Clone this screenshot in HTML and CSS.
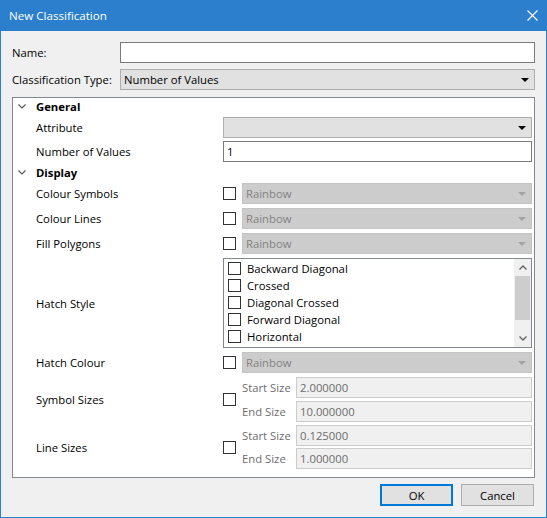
FILE: index.html
```html
<!DOCTYPE html>
<html lang="en">
<head>
  <meta charset="UTF-8">
  <title>New Classification</title>
  <link rel="stylesheet" href="styles.css">
</head>
<body>
  <div class="window">
    <div class="titlebar">
      <span class="title">New Classification</span>
      <span class="close">
        <svg width="11" height="11" viewBox="0 0 11 11"><path d="M0.5 0.5 L10.5 10.5 M10.5 0.5 L0.5 10.5" stroke="#fff" stroke-width="1.1" fill="none"/></svg>
      </span>
    </div>

    <div class="dialog-body">
      <div class="form-row">
        <span class="form-label">Name:</span>
        <div class="textbox"></div>
      </div>
      <div class="form-row gap-7">
        <span class="form-label">Classification Type:</span>
        <div class="combo">
          <span>Number of Values</span>
          <span class="arrow"></span>
        </div>
      </div>

      <!-- property tree -->
      <div class="tree">
        <div class="tree-header">
          <span class="chev"><svg width="8" height="5" viewBox="0 0 8 5"><path d="M0.5 0.5 L4 4 L7.5 0.5" stroke="#555" stroke-width="1.1" fill="none"/></svg></span>
          General
        </div>
        <div class="tree-row tight">
          <span class="tree-label">Attribute</span>
          <div class="tree-ctrl">
            <div class="combo"><span></span><span class="arrow"></span></div>
          </div>
        </div>
        <div class="tree-row">
          <span class="tree-label">Number of Values</span>
          <div class="tree-ctrl">
            <div class="textbox value">1</div>
          </div>
        </div>

        <div class="tree-header">
          <span class="chev"><svg width="8" height="5" viewBox="0 0 8 5"><path d="M0.5 0.5 L4 4 L7.5 0.5" stroke="#555" stroke-width="1.1" fill="none"/></svg></span>
          Display
        </div>
        <div class="tree-row">
          <span class="tree-label">Colour Symbols</span>
          <div class="tree-ctrl">
            <span class="checkbox"></span>
            <div class="combo disabled"><span>Rainbow</span><span class="arrow"></span></div>
          </div>
        </div>
        <div class="tree-row">
          <span class="tree-label">Colour Lines</span>
          <div class="tree-ctrl">
            <span class="checkbox"></span>
            <div class="combo disabled"><span>Rainbow</span><span class="arrow"></span></div>
          </div>
        </div>
        <div class="tree-row">
          <span class="tree-label">Fill Polygons</span>
          <div class="tree-ctrl">
            <span class="checkbox"></span>
            <div class="combo disabled"><span>Rainbow</span><span class="arrow"></span></div>
          </div>
        </div>
        <div class="tree-row">
          <span class="tree-label">Hatch Style</span>
          <div class="tree-ctrl">
            <div class="listbox">
              <div class="list-items">
                <div class="list-item"><span class="checkbox"></span>Backward Diagonal</div>
                <div class="list-item"><span class="checkbox"></span>Crossed</div>
                <div class="list-item"><span class="checkbox"></span>Diagonal Crossed</div>
                <div class="list-item"><span class="checkbox"></span>Forward Diagonal</div>
                <div class="list-item"><span class="checkbox"></span>Horizontal</div>
              </div>
              <div class="scrollbar">
                <span class="sb-btn"><svg width="8" height="5" viewBox="0 0 8 5"><path d="M0.5 4.5 L4 1 L7.5 4.5" stroke="#606060" stroke-width="1.3" fill="none"/></svg></span>
                <span class="sb-track"><span class="sb-thumb"></span></span>
                <span class="sb-btn"><svg width="8" height="5" viewBox="0 0 8 5"><path d="M0.5 0.5 L4 4 L7.5 0.5" stroke="#606060" stroke-width="1.3" fill="none"/></svg></span>
              </div>
            </div>
          </div>
        </div>
        <div class="tree-row">
          <span class="tree-label">Hatch Colour</span>
          <div class="tree-ctrl">
            <span class="checkbox"></span>
            <div class="combo disabled"><span>Rainbow</span><span class="arrow"></span></div>
          </div>
        </div>
        <div class="tree-row">
          <span class="tree-label">Symbol Sizes</span>
          <div class="tree-ctrl">
            <span class="checkbox"></span>
            <div class="sizes">
              <span class="size-label">Start Size</span>
              <div class="textbox disabled">2.000000</div>
              <span class="size-label">End Size</span>
              <div class="textbox disabled">10.000000</div>
            </div>
          </div>
        </div>
        <div class="tree-row tight-top">
          <span class="tree-label">Line Sizes</span>
          <div class="tree-ctrl">
            <span class="checkbox"></span>
            <div class="sizes narrow">
              <span class="size-label">Start Size</span>
              <div class="textbox disabled">0.125000</div>
              <span class="size-label">End Size</span>
              <div class="textbox disabled">1.000000</div>
            </div>
          </div>
        </div>
      </div>

      <div class="buttons">
        <button class="btn default">OK</button>
        <button class="btn">Cancel</button>
      </div>
    </div>
  </div>
</body>
</html>
```

FILE: styles.css
```css
html, body {
  margin: 0;
  padding: 0;
}

body {
  font-family: 'Segoe UI', 'Open Sans', sans-serif;
  font-size: 11.3px;
  color: #000;
  background: #f0f0f0;
}

.window {
  width: 547px;
  height: 518px;
  box-sizing: border-box;
  border: 1px solid #2b7fcc;
  border-top: 0;
  background: #f0f0f0;
  display: flex;
  flex-direction: column;
}

.titlebar {
  height: 31px;
  flex-shrink: 0;
  background: #2b7fcc;
  color: #fff;
  display: flex;
  align-items: center;
  padding-left: 8px;
  font-size: 11.6px;
}

.titlebar .title {
  padding-bottom: 1px;
}

.close {
  margin-left: auto;
  width: 28px;
  height: 31px;
  display: flex;
  align-items: center;
  justify-content: center;
}

.dialog-body {
  flex: 1;
  display: flex;
  flex-direction: column;
  padding: 11px 11px 11px 11px;
}

.form-row {
  display: flex;
  align-items: center;
  height: 21px;
  margin-bottom: 6px;
}

.form-row.gap-7 {
  margin-bottom: 7px;
}

.form-label {
  width: 108px;
  flex-shrink: 0;
}

.textbox {
  flex: 1;
  height: 21px;
  box-sizing: border-box;
  border: 1px solid #7a7a7a;
  background: #fff;
  display: flex;
  align-items: center;
  padding-left: 3px;
}

.textbox.disabled {
  border-color: #cccccc;
  background: #f0f0f0;
  color: #6d6d6d;
}

.combo {
  flex: 1;
  height: 21px;
  box-sizing: border-box;
  border: 1px solid #adadad;
  background: #e1e1e1;
  display: flex;
  align-items: center;
  justify-content: space-between;
  padding: 0 5px 0 3px;
}

.arrow {
  width: 0;
  height: 0;
  border-left: 4px solid transparent;
  border-right: 4px solid transparent;
  border-top: 4px solid #000;
}

.combo.disabled {
  background: #cccccc;
  border-color: #c4c4c4;
  color: #838383;
}

.combo.disabled .arrow {
  border-top-color: #a3a3a3;
}

/* property tree */
.tree {
  flex: 1;
  border: 1px solid #828790;
  background: #fff;
  padding: 0 2px 0 0;
}

.tree-header {
  height: 17px;
  display: flex;
  align-items: center;
  padding-left: 5px;
  font-weight: bold;
}

.chev {
  width: 18px;
  display: flex;
  align-items: center;
}

.tree-row {
  display: flex;
  align-items: center;
  padding: 2px 0;
}

.tree-row.tight {
  padding-bottom: 1px;
}

.tree-row.tight-top {
  padding-top: 1px;
}

.tree-label {
  width: 210px;
  flex-shrink: 0;
  padding-left: 23px;
  box-sizing: border-box;
}

.tree-ctrl {
  flex: 1;
  display: flex;
  align-items: center;
  gap: 6px;
}

.checkbox {
  width: 13px;
  height: 13px;
  box-sizing: border-box;
  border: 1px solid #333;
  background: #fff;
  flex-shrink: 0;
}

.listbox {
  flex: 1;
  height: 90px;
  box-sizing: border-box;
  border: 1px solid #828790;
  background: #fff;
  display: flex;
}

.list-items {
  flex: 1;
  padding: 1px 0 0 4px;
}

.list-item {
  height: 17px;
  display: flex;
  align-items: center;
  gap: 6px;
}

.scrollbar {
  width: 17px;
  background: #f0f0f0;
  display: flex;
  flex-direction: column;
}

.sb-btn {
  height: 17px;
  display: flex;
  align-items: center;
  justify-content: center;
}

.sb-track {
  flex: 1;
  padding: 0 1px;
}

.sb-thumb {
  display: block;
  height: 44px;
  background: #cdcdcd;
}

.sizes {
  flex: 1;
  display: grid;
  grid-template-columns: 54px 1fr;
  row-gap: 3px;
  align-items: center;
}

.sizes.narrow {
  row-gap: 2px;
}

.size-label {
  color: #6d6d6d;
}

.buttons {
  display: flex;
  justify-content: flex-end;
  gap: 8px;
  margin-top: 6px;
  padding-right: 1px;
}

.btn {
  width: 73px;
  height: 22px;
  box-sizing: border-box;
  border: 1px solid #adadad;
  background: #e1e1e1;
  font-family: inherit;
  font-size: inherit;
  color: #000;
  padding: 0;
}

.btn.default {
  border: 2px solid #0078d7;
}
```
